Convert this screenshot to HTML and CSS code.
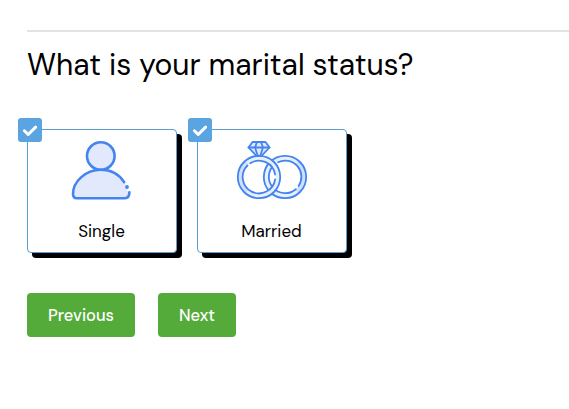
FILE: index.html
```
<!DOCTYPE html>
<html lang="en">
<head>
    <title>Marital status</title>
    <meta charset="UTF-8">
    <link rel="stylesheet" href="styles.css">
</head>
<body>
    <div class="step">
        <h2 class="question">What is your marital status?</h2>

        <!-- Options -->
        <div class="options">
            <div class="option">
                <span class="check">
                    <svg width="24" height="24" viewBox="0 0 24 24"><path d="M6.4 12.800l3.800 3.700 7.400-7.400"/></svg>
                </span>
                <svg class="icon" width="72" height="60" viewBox="0 0 72 60">
                    <circle class="fill" cx="34.8" cy="16" r="13.8"/>
                    <path class="fill-only" d="M7 54c0-12 13-24.200 28-24.200 12 0 21 6 25 16l2.800 9q0 3.200-3.200 3.200H10.500Q7 58 7 54z"/>
                    <path class="line" d="M58.200 42.200C53 34.300 45 29.800 35 29.800 19 29.800 7 42 7 54q0 4.200 4 4.200h48q4.300 0 4.400-5.900"/>
                    <circle class="dot" cx="61" cy="47" r="1.900"/>
                </svg>
                <span class="label">Single</span>
            </div>

            <div class="option">
                <span class="check">
                    <svg width="24" height="24" viewBox="0 0 24 24"><path d="M6.4 12.800l3.800 3.700 7.400-7.400"/></svg>
                </span>
                <svg class="icon rings" width="72" height="60" viewBox="0 0 72 60">
                    <!-- Right ring -->
                    <circle class="band" cx="49" cy="37" r="18.700"/>
                    <path class="shade" d="M62.200 23.800A18.700 18.700 0 0 1 62.200 50.200"/>
                    <circle class="line" cx="49" cy="37" r="21.200"/>
                    <path class="line" d="M42 22.200A16.300 16.300 0 0 1 62.600 46M59.800 49.200A16.300 16.300 0 1 1 38.500 24.500"/>
                    <!-- Left ring -->
                    <circle class="band" cx="23" cy="37" r="18.700"/>
                    <path class="shade" d="M9.800 50.200A18.700 18.700 0 0 1 9.800 23.800"/>
                    <circle class="line" cx="23" cy="37" r="21.200"/>
                    <path class="line" d="M11.500 25.500A16.300 16.300 0 1 0 39.100 39.500M39.100 34.500A16.300 16.300 0 0 0 14.300 23.200"/>
                    <!-- Diamond -->
                    <path class="fill" d="M16.500 2h13l4 5.500-8 8.300h-5l-8-8.300z"/>
                    <path class="line" d="M12.500 7.500h21M21 2l-2 5.500 2.500 7.500M25 2l2 5.500-2.500 7.500"/>
                </svg>
                <span class="label">Married</span>
            </div>
        </div>

        <!-- Navigation -->
        <div class="actions">
            <button class="btn btn-previous" type="button">Previous</button>
            <button class="btn btn-next" type="button">Next</button>
        </div>
    </div>
</body>
</html>
```
FILE: styles.css
```
* {
    box-sizing: border-box;
}
body {
    margin: 0;
    padding: 30px 0 0 27px;
    background-color: #fff;
    color: #000;
    font-family: "DM Sans", Inter, "Liberation Sans", sans-serif;
}
.step {
    border-top: 2px solid #e3e3e3;
}
.question {
    margin: 0;
    padding-top: 13px;
    font-size: 30px;
    font-weight: 400;
    line-height: 40px;
    white-space: nowrap;
}

/* Options */
.options {
    display: flex;
    gap: 20px;
    margin-top: 44px;
}
.option {
    position: relative;
    display: flex;
    flex-direction: column;
    align-items: center;
    width: 150px;
    height: 124px;
    padding-top: 10px;
    border: 1px solid #5a9fd0;
    border-radius: 4px;
    background-color: #fff;
    box-shadow: 5px 5px 0 #000;
}
.check {
    position: absolute;
    top: -12px;
    left: -10px;
    width: 24px;
    height: 24px;
    border-radius: 3px;
    background-color: #5ba4e2;
}
.check svg {
    display: block;
    fill: none;
    stroke: #fff;
    stroke-width: 3;
    stroke-linecap: round;
    stroke-linejoin: round;
}
.icon {
    display: block;
    fill: none;
    stroke: #4384ee;
    stroke-width: 2.6;
    stroke-linecap: round;
    stroke-linejoin: round;
}
.rings {
    stroke-width: 1.8;
}
.fill {
    fill: #e3e9fc;
}
.fill-only {
    fill: #e3e9fc;
    stroke: none;
}
.dot {
    fill: #4384ee;
    stroke: none;
}
.band {
    stroke: #e8f0fe;
    stroke-width: 4;
}
.shade {
    stroke: #cfdffc;
    stroke-width: 4;
}
.label {
    margin-top: 19px;
    padding-right: 1px;
    font-size: 17px;
    line-height: 24px;
}

/* Buttons */
.actions {
    display: flex;
    gap: 23px;
    margin-top: 40px;
}
.btn {
    height: 44px;
    padding: 0;
    border: 0;
    border-radius: 4px;
    background-color: #54ab39;
    color: #fff;
    font-family: inherit;
    font-size: 16.5px;
    font-weight: 500;
    cursor: pointer;
}
.btn-previous {
    width: 108px;
}
.btn-next {
    width: 78px;
}
```
